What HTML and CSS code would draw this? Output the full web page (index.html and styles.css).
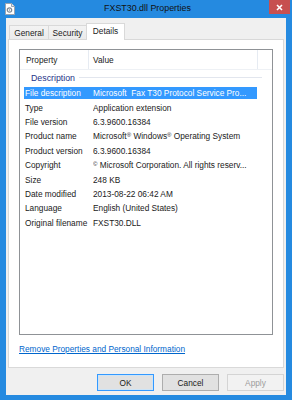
FILE: index.html
```html
<!DOCTYPE html>
<html>
<head>
<meta charset="utf-8">
<link rel="stylesheet" href="styles.css">
</head>
<body>
<div class="window">
  <div class="titlebar">
    <div class="ticon">
      <svg width="10" height="12" viewBox="0 0 10 12">
        <path d="M0.5 0.5 H6.5 L9.5 3.5 V11.5 H0.5 Z" fill="#ffffff" stroke="#9aa4b0"/>
        <path d="M6.5 0.5 V3.5 H9.5" fill="#e8ecf0" stroke="#9aa4b0"/>
        <circle cx="4.5" cy="7" r="2.2" fill="none" stroke="#7d8894" stroke-width="1.2"/>
        <circle cx="4.5" cy="7" r="0.7" fill="#7d8894"/>
      </svg>
    </div>
    <div class="title">FXST30.dll Properties</div>
    <div class="close">
      <svg width="7" height="7" viewBox="0 0 7 7"><path d="M1 1 L6 6 M6 1 L1 6" stroke="#ffffff" stroke-width="1.6"/></svg>
    </div>
  </div>
  <div class="client">
    <div class="tabs">
      <div class="tab t-general">General</div>
      <div class="tab t-security">Security</div>
      <div class="tab t-details active">Details</div>
    </div>
    <div class="panel">
      <div class="listview">
        <div class="lv-header">
          <div class="hcol h1">Property</div>
          <div class="hcol h2">Value</div>
          <div class="hcol h3"></div>
        </div>
        <div class="group"><span class="gtext">Description</span><span class="gline"></span></div>
        <div class="rows">
          <div class="row selected"><div class="prop">File description</div><div class="val">Microsoft&nbsp; Fax T30 Protocol Service Pro...</div></div>
          <div class="row"><div class="prop">Type</div><div class="val">Application extension</div></div>
          <div class="row"><div class="prop">File version</div><div class="val">6.3.9600.16384</div></div>
          <div class="row"><div class="prop">Product name</div><div class="val">Microsoft<span class="sup">®</span> Windows<span class="sup">®</span> Operating System</div></div>
          <div class="row"><div class="prop">Product version</div><div class="val">6.3.9600.16384</div></div>
          <div class="row"><div class="prop">Copyright</div><div class="val"><span class="sup">©</span> Microsoft Corporation. All rights reserv...</div></div>
          <div class="row"><div class="prop">Size</div><div class="val">248 KB</div></div>
          <div class="row"><div class="prop">Date modified</div><div class="val">2013-08-22 06:42 AM</div></div>
          <div class="row"><div class="prop">Language</div><div class="val">English (United States)</div></div>
          <div class="row"><div class="prop">Original filename</div><div class="val">FXST30.DLL</div></div>
        </div>
      </div>
      <a class="link" href="#">Remove Properties and Personal Information</a>
    </div>
    <div class="buttons">
      <div class="btn default">OK</div>
      <div class="btn">Cancel</div>
      <div class="btn disabled">Apply</div>
    </div>
  </div>
</div>
</body>
</html>
```
FILE: styles.css
```css
* { box-sizing: border-box; }
html, body { margin: 0; padding: 0; }
body {
  font-family: "Liberation Sans", Arial, sans-serif;
  font-size: 8.3px;
  color: #1a1a1a;
  background: #258ae0;
}
.window {
  width: 292px;
  height: 400px;
  background: #258ae0;
  display: flex;
  flex-direction: column;
  padding: 0 6px 5px 6px;
}
.titlebar {
  height: 18px;
  margin: 0 -6px;
  padding: 0 2px 0 5px;
  display: grid;
  grid-template-columns: 1fr auto 1fr;
  align-items: start;
}
.ticon { justify-self: start; padding-top: 3px; display: flex; }
.title {
  font-size: 8.9px;
  color: #111;
  padding-top: 3px;
  line-height: 11px;
}
.close {
  justify-self: end;
  width: 21px;
  height: 14px;
  background: #c75050;
  display: flex;
  align-items: center;
  justify-content: center;
}
.client {
  flex: 1;
  background: #f0f0f0;
  padding: 5px 2px 4px 2px;
  display: flex;
  flex-direction: column;
}
.tabs {
  height: 16px;
  display: flex;
  align-items: flex-end;
  padding-left: 1px;
  position: relative;
  z-index: 1;
}
.tab {
  height: 14px;
  border: 1px solid #d9d9d9;
  border-bottom: none;
  background: linear-gradient(#f3f3f3, #ebebeb);
  display: flex;
  align-items: center;
  justify-content: center;
  margin-left: -1px;
  line-height: 10px;
  padding-top: 1px;
}
.t-general { width: 40px; margin-left: 0; }
.t-security { width: 39px; }
.t-details { width: 39px; }
.tab.active {
  height: 17px;
  margin-bottom: -1px;
  background: #ffffff;
  padding-top: 0;
  padding-bottom: 2px;
}
.panel {
  height: 329px;
  background: #ffffff;
  border: 1px solid #d9d9d9;
  padding: 9px 10px 0 10px;
  display: flex;
  flex-direction: column;
}
.listview {
  height: 286px;
  border: 1px solid #8f9296;
  background: #fff;
  display: flex;
  flex-direction: column;
}
.lv-header {
  height: 20px;
  display: flex;
  border-bottom: 1px solid #eef1f5;
}
.hcol {
  height: 19px;
  display: flex;
  align-items: center;
  border-right: 1px solid #e6ebf2;
}
.h1 { width: 69px; padding-left: 6px; }
.h2 { width: 169px; padding-left: 4px; }
.h3 { flex: 1; border-right: none; }
.group {
  height: 15px;
  display: flex;
  align-items: center;
  padding-left: 11px;
  padding-right: 10px;
}
.gtext { color: #1e3287; font-size: 8.8px; }
.gline {
  flex: 1;
  height: 1px;
  background: #e2e6ee;
  margin-left: 4px;
}
.rows { margin-top: 1px; padding-left: 4px; }
.row {
  width: 233px;
  height: 14.4px;
  display: flex;
  align-items: center;
  white-space: nowrap;
}
.row.selected {
  background: #3399ff;
  color: #ffffff;
  background-clip: content-box;
  padding: 1px 0;
}
.prop { width: 69px; padding-left: 1px; }
.val { flex: 1; overflow: hidden; }
.sup { font-size: 6px; vertical-align: 2px; }
.link {
  margin-top: 9px;
  color: #0066cc;
  text-decoration: underline;
  line-height: 11px;
  align-self: flex-start;
}
.buttons {
  margin-top: 6px;
  height: 17px;
  display: flex;
  justify-content: flex-end;
  gap: 8px;
}
.btn {
  width: 57px;
  height: 17px;
  border: 1px solid #adadad;
  background: #e1e1e1;
  display: flex;
  align-items: center;
  justify-content: center;
  color: #1a1a1a;
}
.btn.default { border-color: #3399ff; background: #e1e1e1; box-shadow: inset 0 0 0 1px #cde4f7; }
.btn.disabled { border-color: #d4d4d4; background: #f2f2f2; color: #9c9c9c; }
```
